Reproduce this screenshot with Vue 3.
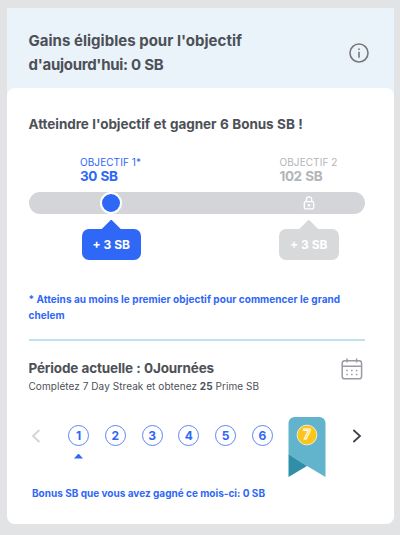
<template>
  <div class="page">
    <section class="card">
      <header class="card-header">
        <h1 class="title">Gains éligibles pour l'objectif<br><span class="total">d'aujourd'hui: 0 SB</span></h1>
        <svg class="info-icon" viewBox="0 0 20 20">
          <circle cx="10" cy="10" r="9" />
          <path d="M10 8.7v6M10 5.4v1.5" />
        </svg>
      </header>

      <div class="card-body">
        <h2 class="subtitle">Atteindre l'objectif et gagner 6 Bonus SB !</h2>

        <div class="goal-row labels">
          <div v-for="goal in goals" :key="goal.id" class="goal-label" :class="{ locked: goal.locked }">
            <div class="goal-name">{{ goal.name }}</div>
            <div class="goal-value">{{ goal.value }}</div>
          </div>
        </div>

        <div class="track">
          <span class="knob"></span>
          <svg class="lock" viewBox="0 0 12 14">
            <path d="M3.3 5.5V3.6a2.7 2.7 0 0 1 5.4 0v1.9" />
            <rect x="1.3" y="5.6" width="9.4" height="7.2" rx="1.2" />
            <path d="M6 8v2.4M4.8 9.2h2.4" />
          </svg>
        </div>

        <div class="goal-row bubbles">
          <div v-for="goal in goals" :key="goal.id" class="bubble-wrap" :class="{ locked: goal.locked }">
            <span class="bubble-arrow"></span>
            <div class="bubble"><span>{{ goal.bonus }}</span></div>
          </div>
        </div>

        <p class="note">* Atteins au moins le premier objectif pour commencer le grand<br>chelem</p>

        <hr class="divider">

        <div class="period">
          <div class="period-text">
            <div class="period-title">Période actuelle : 0Journées</div>
            <div class="period-sub">Complétez 7 Day Streak et obtenez <b>25</b> Prime SB</div>
          </div>
          <svg class="calendar" viewBox="0 0 22 22">
            <rect x="1.2" y="2.8" width="19.4" height="18" rx="2.6" />
            <path d="M1.2 8.3h19.4M6 .6v4M15.6 .6v4" />
            <path d="M5.3 12.4h1.5M10.1 12.4h1.5M14.9 12.4h1.5M5.3 16.4h1.5M10.1 16.4h1.5M14.9 16.4h1.5" />
          </svg>
        </div>

        <div class="streak">
          <svg class="chevron prev" viewBox="0 0 10 14"><path d="M8.4 1L2 7l6.4 6" /></svg>
          <div class="days">
            <div v-for="day in 6" :key="day" class="day">
              <span class="day-circle">{{ day }}</span>
              <span v-if="day === currentDay" class="day-marker"></span>
            </div>
          </div>
          <div class="ribbon">
            <svg class="ribbon-shape" viewBox="0 0 38 60">
              <path fill="#61b4cb" d="M.5 6a6 6 0 0 1 6-6H31.5a6 6 0 0 1 6 6V60L19 49 .5 37z" />
              <path fill="#2f8fa9" d="M.5 37L19 49 .5 60z" />
            </svg>
            <svg class="ribbon-badge" viewBox="0 0 22 22">
              <circle cx="11" cy="11" r="9.9" />
              <text x="11" y="15.2">7</text>
            </svg>
          </div>
          <svg class="chevron next" viewBox="0 0 10 14"><path d="M1.4 1L8 7l-6.6 6" /></svg>
        </div>

        <p class="month">Bonus SB que vous avez gagné ce mois-ci: 0 SB</p>
      </div>
    </section>
  </div>
</template>

<script setup>
import { ref } from 'vue';

const currentDay = ref(1);

const goals = ref([
  { id: 1, name: 'OBJECTIF 1*', value: '30 SB', bonus: '+ 3 SB', locked: false },
  { id: 2, name: 'OBJECTIF 2', value: '102 SB', bonus: '+ 3 SB', locked: true }
]);
</script>

<style>
body {
  margin: 0;
  background: #e2e3e5;
}
</style>

<style scoped>
.page {
  box-sizing: border-box;
  width: 400px;
  height: 535px;
  padding: 8px 6px 11px 7px;
  background: #e2e3e5;
  font-family: Inter, "Liberation Sans", sans-serif;
  color: #4d5057;
  white-space: nowrap;
  overflow: hidden;
}

.card {
  display: flex;
  flex-direction: column;
  height: 516px;
  background: #eaf3fa;
  border-radius: 0 0 8px 8px;
}

.card-header {
  display: flex;
  justify-content: space-between;
  align-items: flex-start;
  box-sizing: border-box;
  height: 80px;
  padding: 21px 25.5px 0 21.5px;
}

.title {
  margin: 0;
  font-size: 15px;
  line-height: 24px;
  font-weight: 700;
  letter-spacing: 0.02px;
}

.total {
  letter-spacing: -0.28px;
}

.info-icon {
  width: 20px;
  height: 20px;
  margin-top: 14px;
  fill: none;
  stroke: #77777c;
  stroke-width: 1.6;
}

.card-body {
  flex: 1;
  padding: 0 29.5px 0 21.5px;
  background: #fff;
  border-radius: 8px;
}

.subtitle {
  margin: 0;
  padding-top: 26px;
  font-size: 13.5px;
  line-height: 20px;
  font-weight: 700;
  letter-spacing: -0.06px;
  word-spacing: 0.4px;
}

.goal-row {
  display: grid;
  grid-template-columns: 199.5px 1fr;
}

.labels {
  padding: 21px 0 0 51.5px;
  color: #2f67f6;
}

.goal-name {
  font-size: 10px;
  line-height: 14px;
  letter-spacing: 0.08px;
}

.goal-value {
  font-size: 13.5px;
  line-height: 15px;
  font-weight: 700;
  letter-spacing: -0.4px;
  word-spacing: 0.8px;
}

.goal-label.locked {
  color: #b2b5ba;
}

.track {
  display: flex;
  align-items: center;
  height: 22px;
  margin-top: 8px;
  padding-left: 71.5px;
  border-radius: 11px;
  background: #d4d5d9;
}

.knob {
  width: 18px;
  height: 18px;
  border: 2px solid #fff;
  border-radius: 50%;
  background: #2f67f6;
}

.lock {
  width: 12px;
  height: 14px;
  margin-left: 181px;
  fill: none;
  stroke: #fff;
  stroke-width: 1.3;
}

.bubbles {
  grid-template-columns: 197.5px 1fr;
  padding: 5.5px 0 0 53px;
}

.bubble-wrap {
  display: flex;
  flex-direction: column;
  align-items: center;
  width: 59.5px;
  color: #2f67f6;
}

.bubble-wrap.locked {
  color: #d8d9da;
}

/* overlaps the bubble by 1px so no seam shows between them */
.bubble-arrow {
  width: 20px;
  height: 10px;
  margin-bottom: -1px;
  background: currentColor;
  clip-path: polygon(50% 0, 100% 100%, 0 100%);
}

.bubble {
  width: 100%;
  height: 31px;
  border-radius: 7px;
  background: currentColor;
  font-size: 12px;
  line-height: 31px;
  font-weight: 700;
  text-align: center;
}

.bubble span {
  color: #fff;
}

.note {
  margin: 32.5px 0 0;
  color: #2f67f6;
  font-size: 10px;
  line-height: 15.5px;
  font-weight: 700;
  letter-spacing: 0.06px;
}

.divider {
  height: 1.5px;
  margin: 16px 0 0;
  border: 0;
  background: #bfe2ee;
}

.period {
  display: flex;
  justify-content: space-between;
  height: 36px;
  padding-top: 17px;
}

.period-title {
  font-size: 13.5px;
  line-height: 20px;
  font-weight: 700;
  letter-spacing: -0.16px;
  word-spacing: 0.4px;
}

.period-sub {
  font-size: 10px;
  line-height: 16px;
  letter-spacing: 0.06px;
}

.calendar {
  width: 22px;
  height: 22px;
  margin-top: 0.5px;
  margin-right: 1.5px;
  fill: none;
  stroke: #999ba2;
  stroke-width: 1.5;
}

.streak {
  display: flex;
  align-items: flex-start;
  height: 60px;
  margin-top: 23px;
}

.chevron {
  width: 10px;
  height: 14px;
  margin-top: 12px;
  fill: none;
  stroke-width: 1.8;
}

.prev {
  margin-left: 2.5px;
  stroke: #d3d4d8;
}

.next {
  margin-left: 26px;
  stroke: #3f424b;
}

.days {
  display: flex;
  gap: 15.8px;
  padding: 8px 0 0 27px;
}

.day {
  display: flex;
  flex-direction: column;
  align-items: center;
}

.day-circle {
  box-sizing: border-box;
  width: 21px;
  height: 21px;
  border: 1px solid #5c86f8;
  border-radius: 50%;
  color: #2f67f6;
  font-size: 12px;
  line-height: 19px;
  font-weight: 700;
  text-align: center;
}

.day-marker {
  width: 9px;
  height: 5px;
  margin-top: 8px;
  background: #2f67f6;
  clip-path: polygon(50% 0, 100% 100%, 0 100%);
}

.ribbon {
  position: relative;
  width: 38px;
  height: 60px;
  margin-left: 15.5px;
}

.ribbon-shape {
  display: block;
  width: 38px;
  height: 60px;
}

.ribbon-badge {
  position: absolute;
  top: 7.5px;
  left: 8px;
  width: 22px;
  height: 22px;
}

.ribbon-badge circle {
  fill: #fcc51b;
  stroke: #e9ebdc;
  stroke-width: 1;
}

.ribbon-badge text {
  fill: #fcc51b;
  stroke: #fff;
  stroke-width: 1;
  font-size: 13px;
  font-weight: 700;
  text-anchor: middle;
}

.month {
  margin: 8px 0 0 3.5px;
  color: #2f67f6;
  font-size: 10px;
  line-height: 16px;
  font-weight: 700;
}
</style>
